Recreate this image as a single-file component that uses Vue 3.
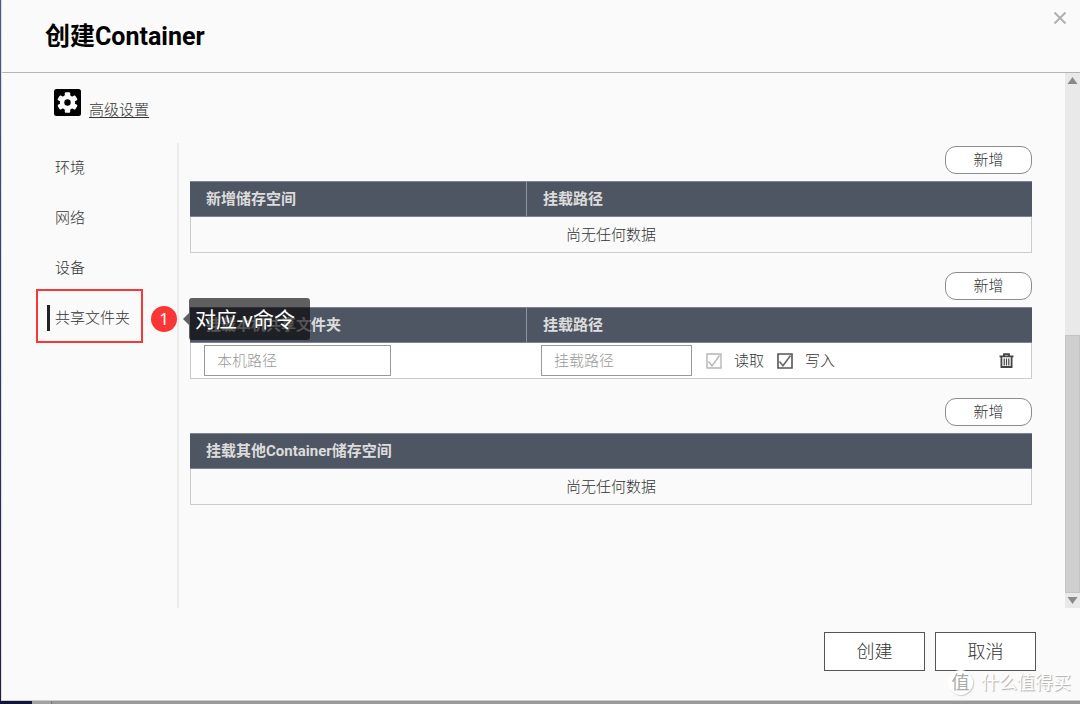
<script setup>
import { ref } from 'vue'

const tabs = ['环境', '网络', '设备', '共享文件夹']
const active = ref('共享文件夹')
const hostPath = ref('')
const mountPath = ref('')
const canRead = ref(true)
const canWrite = ref(true)
</script>

<template>
  <div class="desktop">
    <main class="dialog">
      <header class="head">
        <h1>创建Container</h1>
        <button class="close" type="button" aria-label="关闭">
          <svg width="14" height="14" viewBox="0 0 14 14"><path d="M1.5 1.5 12.5 12.5M12.5 1.5 1.5 12.5" fill="none" stroke="#b0b0b0" stroke-width="2" /></svg>
        </button>
      </header>

      <div class="body">
        <div class="content">
          <div class="advanced">
            <svg width="27" height="27" viewBox="0 0 27 27">
              <rect width="27" height="27" rx="2.5" fill="#000" />
              <g fill="#fff" transform="translate(13.5 13.5)">
                <circle r="7.6" />
                <rect x="-2.7" y="-10.2" width="5.4" height="20.4" rx="1" />
                <rect x="-2.7" y="-10.2" width="5.4" height="20.4" rx="1" transform="rotate(60)" />
                <rect x="-2.7" y="-10.2" width="5.4" height="20.4" rx="1" transform="rotate(120)" />
                <circle r="3.2" fill="#000" />
              </g>
            </svg>
            <a href="#">高级设置</a>
          </div>

          <div class="columns">
            <nav class="tabs">
              <div v-for="tab in tabs" :key="tab" class="tab-slot">
                <button type="button" class="tab" :class="{ active: tab === active }" @click="active = tab">{{ tab }}</button>
                <template v-if="tab === '共享文件夹'">
                  <span class="marker"></span>
                  <span class="note">
                    <span class="number">1</span>
                    <span class="callout">对应-v命令</span>
                  </span>
                </template>
              </div>
            </nav>

            <div class="panel">
              <section>
                <button class="add" type="button">新增</button>
                <table>
                  <thead><tr><th class="first">新增储存空间</th><th>挂载路径</th></tr></thead>
                  <tbody><tr><td colspan="2" class="empty">尚无任何数据</td></tr></tbody>
                </table>
              </section>

              <section>
                <button class="add" type="button">新增</button>
                <table>
                  <thead><tr><th class="first">挂载本机共享文件夹</th><th>挂载路径</th></tr></thead>
                  <tbody>
                    <tr class="entry">
                      <td><div class="cell"><input v-model="hostPath" class="host" type="text" placeholder="本机路径" aria-label="本机路径" /></div></td>
                      <td>
                        <div class="cell">
                          <input v-model="mountPath" class="mount" type="text" placeholder="挂载路径" aria-label="挂载路径" />
                          <label class="check off"><input v-model="canRead" type="checkbox" disabled />
                            <svg width="16" height="16" viewBox="0 0 16 16"><path d="M1 1H15V15H1Z" fill="none" stroke="currentColor" stroke-width="1.4" /><path d="M2.5 8.5 6 12.8 13.5 2.5" fill="none" stroke="currentColor" stroke-width="1.4" /></svg>
                            <span>读取</span></label>
                          <label class="check"><input v-model="canWrite" type="checkbox" />
                            <svg width="16" height="16" viewBox="0 0 16 16"><path d="M1 1H15V15H1Z" fill="none" stroke="#555" stroke-width="1.6" /><path v-if="canWrite" d="M2.5 8.5 6 12.8 13.5 2.5" fill="none" stroke="#666" stroke-width="1.6" /></svg>
                            <span>写入</span></label>
                          <button class="trash" type="button" aria-label="删除">
                            <svg width="15" height="15" viewBox="0 0 15 15" fill="none" stroke="#444"><path d="M0.5 3.4H14.5M5 3V1.2H10V3" stroke-width="1.8" /><path d="M2.4 3.5V14H12.6V3.5" stroke-width="1.8" /><path d="M5.2 5.5V12.5M7.5 5.5V12.5M9.8 5.5V12.5" stroke-width="1.2" /></svg>
                          </button>
                        </div>
                      </td>
                    </tr>
                  </tbody>
                </table>
              </section>

              <section>
                <button class="add" type="button">新增</button>
                <table>
                  <thead><tr><th>挂载其他Container储存空间</th></tr></thead>
                  <tbody><tr><td class="empty">尚无任何数据</td></tr></tbody>
                </table>
              </section>
            </div>
          </div>
        </div>

        <div class="scrollbar" aria-hidden="true">
          <svg width="15" height="15" viewBox="0 0 15 15"><path d="M2.5 11 7.5 4 12.5 11Z" fill="#8a8a8a" /></svg>
          <div class="track"><div class="thumb"></div></div>
          <svg width="15" height="15" viewBox="0 0 15 15"><path d="M2.5 4 7.5 11 12.5 4Z" fill="#8a8a8a" /></svg>
        </div>
      </div>

      <footer class="foot">
        <button type="button">创建</button>
        <button type="button">取消</button>
      </footer>
    </main>
    <div class="edge"><span class="dark"></span><span class="light"></span></div>
    <div class="watermark"><span class="seal">值</span><span>什么值得买</span></div>
  </div>
</template>

<style>
body { margin: 0; }
</style>

<style scoped>
* { box-sizing: border-box; }
.desktop {
  position: relative;
  display: flex;
  flex-direction: column;
  height: 100vh;
  background: linear-gradient(#485b96, #343c78 40%, #211d48);
  font: 300 15px/22px Roboto, "Noto Sans CJK SC", sans-serif;
  color: #333;
}
button, input { font: inherit; color: inherit; }
button { padding: 0; cursor: pointer; }
.dialog {
  flex: 1;
  min-height: 0;
  display: flex;
  flex-direction: column;
  margin-left: 1px;
  background: #fafafa;
  border-left: 1px solid #dedede;
  border-bottom: 1px solid #ccc;
}
.head {
  display: flex;
  justify-content: space-between;
  align-items: flex-start;
  height: 73px;
  padding: 0 13px 0 43px;
  border-bottom: 1px solid #b5b5b5;
}
h1 { margin: 0; font-size: 25px; line-height: 73px; font-weight: 700; color: #000; }
.close { display: flex; margin-top: 11px; border: 0; background: none; }
.body { flex: 1; display: flex; min-height: 0; }
.content {
  flex: 1;
  display: flex;
  flex-direction: column;
  padding: 16px 33px 0 34px;
}
.advanced { display: flex; gap: 8px; height: 54px; padding-left: 18px; }
.advanced a { margin-top: 10px; height: 24px; color: inherit; text-underline-offset: 2px; }
.columns { flex: 1; display: flex; }
.tabs {
  width: 143px;
  border-right: 2px solid #ececec;
}
.tab-slot { position: relative; width: 107px; height: 50px; padding-top: 12px; }
.tab {
  display: block;
  height: 26px;
  border: 0;
  background: none;
  white-space: nowrap;
  padding-left: 19px;
  line-height: 26px;
}
.tab.active { margin-left: 11px; padding-left: 5px; border-left: 3px solid #222; }
.marker {
  position: absolute;
  inset: -4px 0 0 0;
  border: 2px solid #fb3636;
  pointer-events: none;
}
.note {
  position: absolute;
  left: 115px;
  top: 5px;
  display: flex;
  align-items: center;
  gap: 12px;
  z-index: 2;
}
.number {
  width: 26px;
  height: 26px;
  border-radius: 50%;
  background: #fb3636;
  color: #fff;
  font: 400 17px/26px "Noto Sans", sans-serif;
  text-align: center;
}
.callout {
  position: relative;
  height: 42px;
  padding: 0 15px 0 6px;
  border-radius: 3px;
  background: rgba(0, 0, 0, 0.62);
  color: #fff;
  font-size: 21px;
  line-height: 44px;
  font-weight: 400;
  white-space: nowrap;
}
.callout::before {
  content: "";
  position: absolute;
  right: 100%;
  top: 15px;
  border: 6px solid transparent;
  border-left: 0;
  border-right-color: rgba(0, 0, 0, 0.62);
}
.panel {
  flex: 1;
  display: flex;
  flex-direction: column;
  gap: 19px;
  padding: 3px 0 0 11px;
}
section { display: flex; flex-direction: column; gap: 7px; }
.add {
  align-self: flex-end;
  width: 87px;
  height: 28px;
  border: 1px solid #8c8c8c;
  border-radius: 11px;
  background: #fff;
  line-height: 26px;
}
table { width: 100%; table-layout: fixed; border-collapse: separate; border-spacing: 0; }
th {
  height: 36px;
  padding: 0 16px;
  background: #4f5663;
  border-top: 1px solid #7d8491;
  border-bottom: 1px solid #7d8491;
  color: #dcdcdc;
  font-weight: 700;
  text-align: left;
}
th.first { width: 336px; }
th + th { border-left: 1px solid #8d939e; }
td { height: 36px; padding: 0; border-bottom: 1px solid #ccc; }
td:first-child { border-left: 1px solid #ccc; }
td:last-child { border-right: 1px solid #ccc; }
.empty { text-align: center; }
.entry { background: #fff; }
.cell { display: flex; align-items: center; height: 35px; padding-left: 13px; }
td + td .cell { padding: 0 17px 0 15px; }
input[type="text"] {
  height: 31px;
  padding: 0 12px;
  border: 1px solid #999;
  border-radius: 0;
  background: #fff;
}
input::placeholder { color: #999; opacity: 1; }
.host { width: 187px; }
.mount { width: 151px; margin-right: 14px; }
.check { position: relative; display: flex; align-items: center; gap: 12px; margin-right: 13px; }
.check input { position: absolute; width: 16px; height: 16px; margin: 0; opacity: 0; }
.off svg { color: #b5b5b5; }
.trash { display: flex; margin-left: auto; border: 0; background: none; }
.scrollbar { width: 15px; display: flex; flex-direction: column; background: #e9e9e9; }
.track { flex: 1; display: flex; flex-direction: column; justify-content: flex-end; }
.thumb { height: 51%; background: #cfcfcf; border: 1px solid #c4c4c4; }
.foot {
  display: flex;
  justify-content: flex-end;
  align-items: flex-start;
  gap: 10px;
  height: 92px;
  padding: 24px 44px 0 0;
}
.foot button {
  width: 101px;
  height: 39px;
  border: 1px solid #555;
  background: #fff;
  font-size: 18px;
}
.edge { display: flex; height: 3px; background: #989998; }
.dark { width: 32px; background: #14143a; }
.light { width: 20px; border-right: 1px solid #777; background: #a2a2a2; }
.watermark {
  position: absolute;
  right: 9px;
  bottom: 9px;
  display: flex;
  align-items: center;
  gap: 8px;
  color: #fff;
  font-size: 18px;
  line-height: 25px;
  font-weight: 400;
  text-shadow: 1px 1px 1px #aaa;
  pointer-events: none;
}
.seal {
  width: 25px;
  border-radius: 50%;
  background: #fff;
  box-shadow: 1px 1px 1px #ccc;
  color: #aaa;
  text-align: center;
  text-shadow: none;
}
</style>
